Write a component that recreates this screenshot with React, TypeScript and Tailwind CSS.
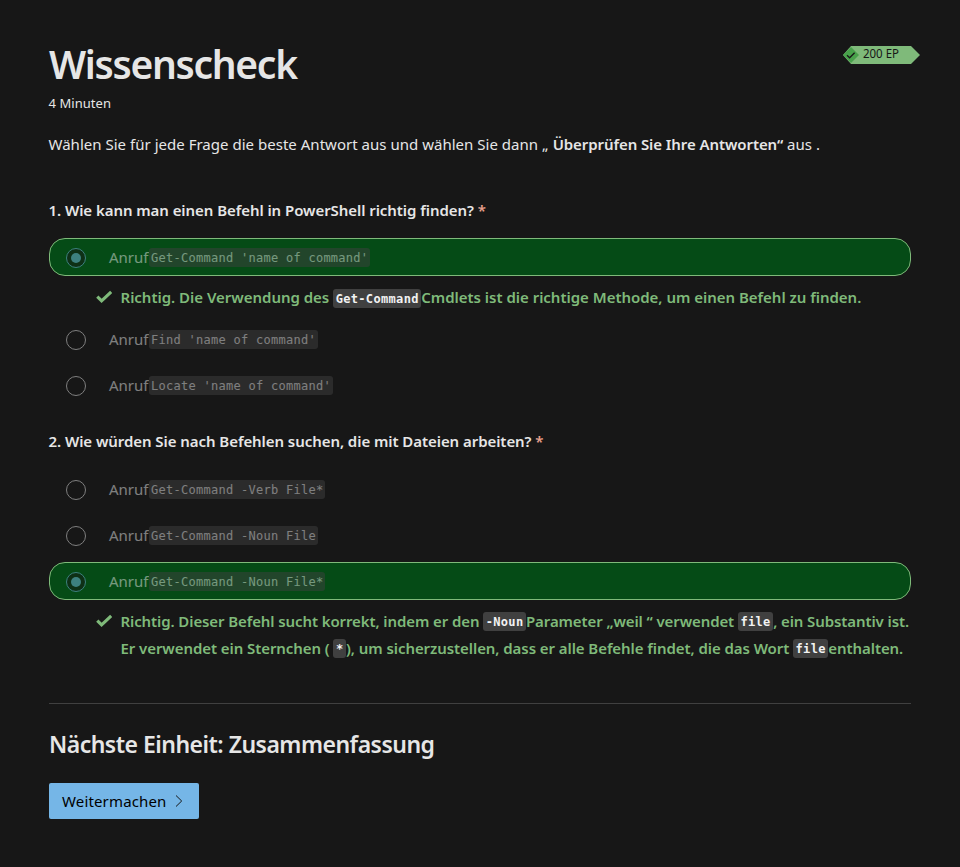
import React from "react";

const Code = ({ children, muted = false }: { children: React.ReactNode; muted?: boolean }) => (
  <code
    className={
      "inline-flex h-[19px] items-center rounded-[3px] align-middle font-['DejaVu_Sans_Mono',monospace] leading-none whitespace-pre " +
      (muted
        ? "bg-[#404040] px-[2px] text-[12px] tracking-[0.27px]"
        : "mt-[-2px] bg-[#404040] px-[2.5px] text-[12px] tracking-[0.33px] font-bold text-[#f2f2f2]")
    }
  >
    {children}
  </code>
);

const Option = ({ code, checked = false }: { code: string; checked?: boolean }) => (
  <label
    className={
      "flex h-[38px] items-center rounded-[16px] border pl-[16px] " +
      (checked ? "border-[#7fba7a] bg-[#054b16]" : "border-transparent")
    }
  >
    <span className="flex items-center opacity-50">
      <span
        className={
          "mt-[2px] flex size-[20px] items-center justify-center rounded-full border " +
          (checked ? "border-[#75b6e7] bg-[#171717]" : "border-[#e6e6e6]")
        }
      >
        {checked && <span className="size-[10px] rounded-full bg-[#75b6e7]" />}
      </span>
      <span className="ml-[23px] flex items-center text-[15px] text-[#e6e6e6]">
        <span className="w-[40px] leading-[20px]">Anruf</span>
        <span className="mt-[1px] flex">
          <Code muted>{code}</Code>
        </span>
      </span>
    </span>
  </label>
);

const Check = () => (
  <svg viewBox="0 0 16 13" className="mt-[6px] mr-[8.5px] ml-[47px] h-[13px] w-[16px] shrink-0" fill="none">
    <path d="M1.3 6.6 5.6 10.8 15.2 1.9" stroke="#7fba7a" strokeWidth="3.2" />
  </svg>
);

const Question = ({ children }: { children: React.ReactNode }) => (
  <h3 className="-ml-[0.5px] h-[20px] text-[15px] leading-[20px] font-semibold tracking-[-0.06px] whitespace-nowrap text-[#e6e6e6]">
    {children} <span className="text-[#e8a08c]">*</span>
  </h3>
);

export default function App() {
  return (
    <main className="h-[867px] w-[960px] overflow-hidden bg-[#171717] pr-[49px] pl-[49px] font-['Noto_Sans','Open_Sans',sans-serif] text-[15px] text-[#e6e6e6]">
      <header className="flex justify-between pt-[40px]">
        <h1 className="h-[48px] text-[39px] leading-[48px] font-semibold tracking-[-1.3px] whitespace-nowrap">
          Wissenscheck
        </h1>
        <div className="mt-[5px] mr-[-9px] h-[20px] w-[78px] shrink-0">
          <svg viewBox="0 0 78 20" className="h-[20px] w-[78px]">
            <path d="M9 1H69L78 10L69 19H9L1 10Z" fill="#7fba7a" />
            <path d="M1 10 9 2 17 10 9 18Z" fill="#48a14b" />
            <path d="M5 10.3 7.6 12.8 12.6 7.7" fill="none" stroke="#171717" strokeWidth="1.3" />
            <text x="21" y="13.2" fontSize="12" fontFamily="Noto Sans" textLength="36" lengthAdjust="spacingAndGlyphs" fill="#171717">
              200 EP
            </text>
          </svg>
        </div>
      </header>
      <p className="mt-[5px] -ml-[0.5px] h-[20px] text-[13px] leading-[20px] tracking-[0.05px]">4 Minuten</p>
      <p className="mt-[19px] -ml-[0.5px] h-[24px] leading-[24px] tracking-[0.02px] whitespace-nowrap">
        Wählen Sie für jede Frage die beste Antwort aus und wählen Sie dann „{" "}
        <b className="ml-[0.5px] font-semibold tracking-[-0.08px]">Überprüfen Sie Ihre Antworten“</b> aus .
      </p>

      <section className="mt-[44px]">
        <Question>1. Wie kann man einen Befehl in PowerShell richtig finden?</Question>
        <div className="mt-[18px] flex flex-col">
          <Option code="Get-Command 'name of command'" checked />
          <div className="mt-[8px] flex h-[27px] font-semibold whitespace-nowrap text-[#7fba7a]">
            <Check />
            <p className="leading-[27px] tracking-[-0.02px]">
              Richtig. Die Verwendung des{" "}
              <span className="relative top-px">
                <Code>Get-Command</Code>
              </span>
              Cmdlets ist die richtige Methode, um einen Befehl zu finden.
            </p>
          </div>
          <div className="mt-[9px] flex flex-col gap-[8px]">
            <Option code="Find 'name of command'" />
            <Option code="Locate 'name of command'" />
          </div>
        </div>
      </section>

      <section className="mt-[27px]">
        <Question>2. Wie würden Sie nach Befehlen suchen, die mit Dateien arbeiten?</Question>
        <div className="mt-[19px] flex flex-col gap-[8px]">
          <Option code="Get-Command -Verb File*" />
          <Option code="Get-Command -Noun File" />
          <Option code="Get-Command -Noun File*" checked />
        </div>
        <div className="mt-[8px] flex font-semibold whitespace-nowrap text-[#7fba7a]">
          <Check />
          <div className="leading-[27px]">
            <p className="h-[27px] tracking-[-0.1px]">
              Richtig. Dieser Befehl sucht korrekt, indem er den <Code>-Noun</Code>
              Parameter „weil “ verwendet <Code>file</Code>, ein Substantiv ist.
            </p>
            <p className="h-[27px] tracking-[-0.07px]">
              Er verwendet ein Sternchen ( <Code>*</Code>), um sicherzustellen, dass er alle Befehle findet, die das
              Wort <Code>file</Code>enthalten.
            </p>
          </div>
        </div>
      </section>

      <hr className="mt-[41px] border-t border-[#404040]" />
      <h2 className="mt-[24px] h-[32px] text-[23px] leading-[32px] font-semibold tracking-[-0.51px] whitespace-nowrap">
        Nächste Einheit: Zusammenfassung
      </h2>
      <button className="mt-[23px] flex h-[36px] w-[150px] items-center rounded-[2px] bg-[#75b6e7] pl-[13px] text-[15px] tracking-[0.15px] text-black">
        Weitermachen
        <svg viewBox="0 0 8 12" className="ml-[8px] h-[12px] w-[8px]" fill="none">
          <path d="M1 .5 6.7 6 1 11.5" stroke="#171717" />
        </svg>
      </button>
    </main>
  );
}
